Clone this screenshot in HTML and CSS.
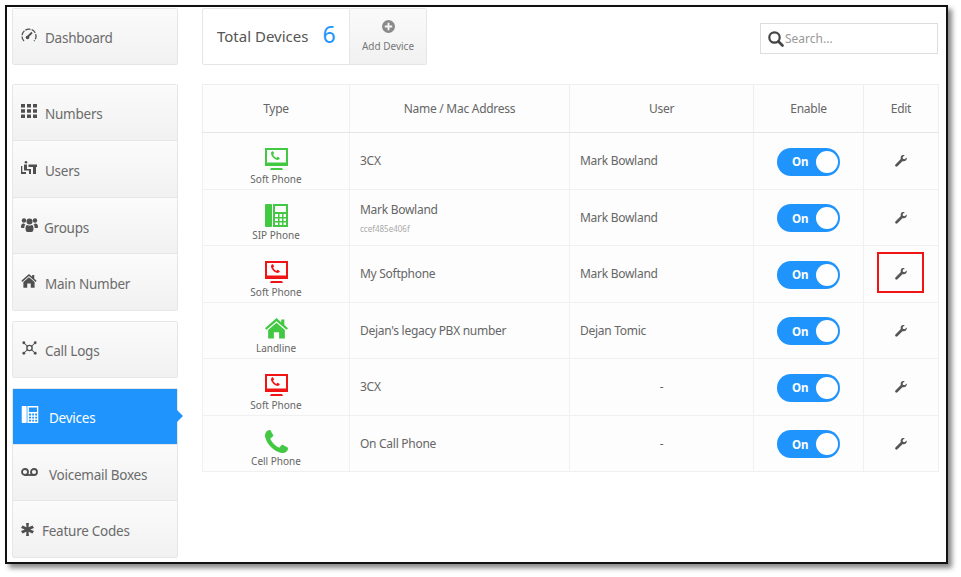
FILE: index.html
```html
<!DOCTYPE html>
<html lang="en">
<head>
<meta charset="utf-8">
<title>Devices</title>
<link rel="stylesheet" href="styles.css">
</head>
<body>
<svg class="defs" width="0" height="0" aria-hidden="true">
  <defs>
    <symbol id="monitor" viewBox="0 0 23 23">
      <path fill="currentColor" fill-rule="evenodd" d="M0 0H23V18H0ZM2 2V14.500H21V2Z"/>
      <path fill="currentColor" d="M6 20H17L18 22H5Z"/>
      <path fill="currentColor" transform="translate(6 3.200) scale(.0062)" d="M1408 1112q0 27-10 70.500t-21 68.500q-21 50-122 106-94 51-186 51-27 0-53-3.500t-57.500-12.500-47-14.500-55.500-20.500-49-18q-98-35-175-83-127-79-264-216t-216-264q-48-77-83-175-3-9-18-49t-20.500-55.500-14.500-47-12.500-57.500-3.500-53q0-92 51-186 56-101 106-122 25-11 68.500-21t70.500-10q14 0 21 3 18 6 53 76 11 19 30 54t35 63.500 31 53.500q3 4 17.500 25t21.500 35.500 7 28.500q0 20-28.500 50t-62 55-62 53-28.500 46q0 9 5 22.500t8.500 20.500 14 24 11.500 19q76 137 174 235t235 174q2 1 19 11.500t24 14 20.500 8.500 22.500 5q18 0 46-28.500t53-62 55-62 50-28.500q14 0 28.500 7t35.500 21.500 25 17.500q25 15 53.500 31t63.500 35 54 30q70 35 76 53 3 7 3 21z"/>
    </symbol>
    <symbol id="wrench" viewBox="0 0 13 13">
      <path fill="currentColor" d="M12.800 2.700 10.400 4.700 8.500 4 8.300 2.200 10.600.3C9 -.3 7.200.2 6.500 1.500 6 2.400 6 3.400 6.300 4.300L.5 10.300C0 10.900 0 11.700.6 12.300 1.200 12.900 2 12.900 2.600 12.300L8.400 6.600C9.500 7 10.800 6.800 11.800 5.900 12.700 5 13 3.800 12.800 2.700Z"/>
    </symbol>
    <symbol id="deskphone" viewBox="0 0 23 23">
      <rect fill="currentColor" x="0" y="0" width="7" height="23" rx="1"/>
      <path fill="currentColor" fill-rule="evenodd" d="M8 0H23V23H8ZM10 2V8H21V2ZM10 10V13H13V10ZM14.500 10V13H17V10ZM18.500 10V13H21V10ZM10 14.500V17H13V14.500ZM14.500 14.500V17H17V14.500ZM18.500 14.500V17H21V14.500ZM10 18.500V21H13V18.500ZM14.500 18.500V21H17V18.500ZM18.500 18.500V21H21V18.500Z"/>
    </symbol>
    <symbol id="home" viewBox="0 0 22 20">
      <path fill="currentColor" d="M11 0 15.500 4V1.500H18.500V6.700L22 9.800 20.600 11.300 11 3 1.400 11.300 0 9.800Z"/>
      <path fill="currentColor" d="M11 4.600 19 11.400V19.500H13.500V13.500H8.500V19.500H3V11.400Z"/>
    </symbol>
  </defs>
</svg>
<div class="frame">
  <nav class="side">
    <div class="group">
      <a class="item solo">
        <svg class="nav-ico" viewBox="0 0 16 14"><path fill="none" stroke="currentColor" stroke-width="1.300" stroke-dasharray="5 1.200" d="M3 13A7 7 0 1 1 13 13"/><path fill="none" stroke="currentColor" stroke-width="1.800" d="M6 9.500 11 4.500"/><circle cx="6.500" cy="9.500" r="1.800" fill="currentColor"/></svg>
        <span>Dashboard</span>
      </a>
    </div>
    <div class="group">
      <a class="item">
        <svg class="nav-ico" viewBox="0 0 16 14"><path fill="currentColor" d="M0 0h4v3.600H0zM6 0h4v3.600H6zM12 0h4v3.600h-4zM0 5.200h4v3.600H0zM6 5.200h4v3.600H6zM12 5.200h4v3.600h-4zM0 10.400h4V14H0zM6 10.400h4V14H6zM12 10.400h4V14h-4z"/></svg>
        <span>Numbers</span>
      </a>
      <a class="item low">
        <svg class="nav-ico" viewBox="0 0 16 14"><circle cx="5" cy="1.300" r="1.300" fill="currentColor"/><path fill="currentColor" d="M0 5h1.300v6H5V13H0ZM3 3.500H6V8H10V13H8V9.500H3ZM7.500 3.500H16V6H15V13H12V6H7.500Z"/></svg>
        <span>Users</span>
      </a>
      <a class="item tight lower">
        <svg class="nav-ico nav-ico-lg" viewBox="0 0 17 14"><circle cx="3" cy="2.500" r="2.200" fill="currentColor"/><circle cx="14" cy="2.500" r="2.200" fill="currentColor"/><circle cx="8.500" cy="3.500" r="3" fill="currentColor"/><path fill="currentColor" d="M0 9C0 6 1.500 5.500 3 5.500 3.500 6 4 6.500 4.500 6.500 3.500 7.500 3.300 8.500 3.300 10H1C.3 10 0 9.500 0 9ZM17 9C17 6 15.500 5.500 14 5.500 13.500 6 13 6.500 12.500 6.500 13.500 7.500 13.700 8.500 13.700 10H16C16.700 10 17 9.500 17 9ZM4.500 11C4.500 8.500 5 7 6.300 7 7 7.500 7.800 7.800 8.500 7.800 9.200 7.800 10 7.500 10.700 7 12 7 12.500 8.500 12.500 11 12.500 13 11.500 14 10.500 14H6.500C5.500 14 4.500 13 4.500 11Z"/></svg>
        <span>Groups</span>
      </a>
      <a class="item low">
        <svg class="nav-ico" viewBox="0 0 22 20"><use href="#home"/></svg>
        <span>Main Number</span>
      </a>
    </div>
    <div class="group">
      <a class="item solo snug">
        <svg class="nav-ico nav-ico-lg" viewBox="0 0 17 16"><path stroke="currentColor" stroke-width="1.200" d="M2 2 6 6M15 2 11 6M2 14 6 10M15 14 11 10"/><circle cx="8.500" cy="8" r="3" fill="none" stroke="currentColor" stroke-width="1.600"/><circle cx="2" cy="2" r="1.600" fill="currentColor"/><circle cx="15" cy="2" r="1.600" fill="currentColor"/><circle cx="2" cy="14" r="1.600" fill="currentColor"/><circle cx="15" cy="14" r="1.600" fill="currentColor"/></svg>
        <span>Call Logs</span>
      </a>
    </div>
    <div class="group">
      <a class="item active">
        <svg class="nav-ico nav-ico-lg" viewBox="0 0 23 23"><use href="#deskphone"/></svg>
        <span>Devices</span>
      </a>
      <a class="item low">
        <svg class="nav-ico nav-ico-lg" viewBox="0 0 17 8"><path fill="none" stroke="currentColor" stroke-width="1.800" d="M4 7H13"/><circle cx="4" cy="4" r="3" fill="none" stroke="currentColor" stroke-width="1.800"/><circle cx="13" cy="4" r="3" fill="none" stroke="currentColor" stroke-width="1.800"/></svg>
        <span class="voice">Voicemail Boxes</span>
      </a>
      <a class="item low">
        <svg class="nav-ico nav-ico-sm" viewBox="0 0 12 12"><path fill="currentColor" d="M4.700 0H7.300L7 4 10.600 2.300 12 4.700 8.500 6 12 7.300 10.600 9.700 7 8 7.300 12H4.700L5 8 1.400 9.700 0 7.300 3.500 6 0 4.700 1.400 2.300 5 4Z"/></svg>
        <span>Feature Codes</span>
      </a>
    </div>
  </nav>
  <main class="main">
    <header class="top">
      <div class="summary">
        <div class="total"><span class="total-label">Total Devices</span><span class="total-num">6</span></div>
        <a class="add">
          <svg class="add-ico" viewBox="0 0 14 14"><path fill="currentColor" fill-rule="evenodd" d="M7 0A7 7 0 1 1 7 14 7 7 0 0 1 7 0ZM6 3V6H3V8H6V11H8V8H11V6H8V3Z"/></svg>
          <span>Add Device</span>
        </a>
      </div>
      <label class="search">
        <svg class="search-ico" viewBox="0 0 16 16"><circle cx="6.500" cy="6.500" r="5.200" fill="none" stroke="currentColor" stroke-width="2.200"/><path stroke="currentColor" stroke-width="2.600" stroke-linecap="round" d="M10.500 10.500 14.500 14.500"/></svg>
        <span>Search...</span>
      </label>
    </header>
    <table class="devices">
      <colgroup><col class="c1"><col class="c2"><col class="c3"><col class="c4"><col class="c5"></colgroup>
      <thead>
        <tr><th>Type</th><th>Name / Mac Address</th><th>User</th><th>Enable</th><th>Edit</th></tr>
      </thead>
      <tbody>
        <tr>
          <td class="type green"><svg class="t-ico"><use href="#monitor"/></svg><small>Soft Phone</small></td>
          <td class="text">3CX</td><td class="text">Mark Bowland</td>
          <td class="mid"><span class="toggle"><b>On</b><i></i></span></td>
          <td class="mid"><svg class="wrench"><use href="#wrench"/></svg></td>
        </tr>
        <tr>
          <td class="type green"><svg class="t-ico"><use href="#deskphone"/></svg><small>SIP Phone</small></td>
          <td class="text">Mark Bowland<em>ccef485e406f</em></td><td class="text">Mark Bowland</td>
          <td class="mid"><span class="toggle"><b>On</b><i></i></span></td>
          <td class="mid"><svg class="wrench"><use href="#wrench"/></svg></td>
        </tr>
        <tr>
          <td class="type red"><svg class="t-ico"><use href="#monitor"/></svg><small>Soft Phone</small></td>
          <td class="text">My Softphone</td><td class="text">Mark Bowland</td>
          <td class="mid"><span class="toggle"><b>On</b><i></i></span></td>
          <td class="mid marked"><svg class="wrench"><use href="#wrench"/></svg><span class="mark"></span></td>
        </tr>
        <tr>
          <td class="type green"><svg class="t-ico"><use href="#home"/></svg><small>Landline</small></td>
          <td class="text">Dejan's legacy PBX number</td><td class="text">Dejan Tomic</td>
          <td class="mid"><span class="toggle"><b>On</b><i></i></span></td>
          <td class="mid"><svg class="wrench"><use href="#wrench"/></svg></td>
        </tr>
        <tr>
          <td class="type red"><svg class="t-ico"><use href="#monitor"/></svg><small>Soft Phone</small></td>
          <td class="text">3CX</td><td class="mid">-</td>
          <td class="mid"><span class="toggle"><b>On</b><i></i></span></td>
          <td class="mid"><svg class="wrench"><use href="#wrench"/></svg></td>
        </tr>
        <tr>
          <td class="type green"><svg class="t-ico" viewBox="0 0 1408 1408"><path fill="currentColor" d="M1408 1112q0 27-10 70.500t-21 68.500q-21 50-122 106-94 51-186 51-27 0-53-3.500t-57.500-12.500-47-14.500-55.500-20.500-49-18q-98-35-175-83-127-79-264-216t-216-264q-48-77-83-175-3-9-18-49t-20.500-55.500-14.500-47-12.500-57.500-3.500-53q0-92 51-186 56-101 106-122 25-11 68.500-21t70.500-10q14 0 21 3 18 6 53 76 11 19 30 54t35 63.500 31 53.500q3 4 17.500 25t21.500 35.500 7 28.500q0 20-28.500 50t-62 55-62 53-28.500 46q0 9 5 22.500t8.500 20.500 14 24 11.500 19q76 137 174 235t235 174q2 1 19 11.500t24 14 20.500 8.500 22.500 5q18 0 46-28.500t53-62 55-62 50-28.500q14 0 28.500 7t35.500 21.500 25 17.500q25 15 53.500 31t63.500 35 54 30q70 35 76 53 3 7 3 21z"/></svg><small>Cell Phone</small></td>
          <td class="text">On Call Phone</td><td class="mid">-</td>
          <td class="mid"><span class="toggle"><b>On</b><i></i></span></td>
          <td class="mid"><svg class="wrench"><use href="#wrench"/></svg></td>
        </tr>
      </tbody>
    </table>
  </main>
</div>
</body>
</html>
```
FILE: styles.css
```css
* { box-sizing: border-box; }
html, body { margin: 0; height: 100%; background: #fff; }
body {
  padding: 5px 0 0 5px;
  font-family: "Noto Sans", "Open Sans", sans-serif;
  color: #666;
  overflow: hidden;
}
.defs { position: absolute; }
.frame {
  width: 943px;
  height: 559px;
  border: 2px solid #111;
  box-shadow: 4px 4px 5px #888;
  padding: 1px 8px 0 5px;
  display: grid;
  grid-template-columns: 166px 736px;
  column-gap: 24px;
}
.side { display: flex; flex-direction: column; }
.group {
  display: flex;
  flex-direction: column;
  border: 1px solid #e6e6e6;
  border-radius: 2px;
  margin-bottom: 10px;
}
.group:first-child { margin-bottom: 19px; }
.item {
  height: 56.250px;
  display: flex;
  align-items: center;
  gap: 8px;
  padding: 2px 0 0 8px;
  font-size: 13.500px;
  letter-spacing: -.25px;
  color: #6b6b6b;
  background: linear-gradient(#fbfbfb, #f1f1f1);
  border-bottom: 1px solid #e6e6e6;
  position: relative;
}
.item:last-child { border-bottom: 0; }
.item.solo { height: 55px; }
.item.tight { gap: 6px; }
.item.snug { gap: 7px; }
.item.low { padding-top: 4px; }
.item.lower { padding-top: 5px; }
.group:last-child .item { height: 56px; }
.nav-ico { width: 16px; height: 14px; color: #4f4f4f; flex: none; margin-top: -5px; }
.nav-ico-lg { width: 17px; }
.nav-ico-sm { width: 13px; height: 13px; margin-top: -3px; }
.voice { margin-left: 3px; }
.item.active { background: #2094fd; color: #fff; }
.item.active .nav-ico { color: #fff; width: 18px; height: 17px; margin-top: -7px; }
.item.active span { margin-left: 2px; }
.item.active::after {
  content: "";
  position: absolute;
  left: 100%;
  top: 21px;
  border: 6px solid transparent;
  border-left-color: #2094fd;
}
.main { display: flex; flex-direction: column; min-width: 0; }
.top {
  display: flex;
  justify-content: space-between;
  align-items: center;
  height: 57px;
  margin-bottom: 19px;
}
.summary {
  display: flex;
  width: 225px;
  height: 57px;
  border: 1px solid #e6e6e6;
  border-radius: 2px;
}
.total {
  width: 147px;
  display: flex;
  align-items: center;
  gap: 14px;
  padding-left: 14px;
  border-right: 1px solid #e6e6e6;
}
.total-label { font-size: 15px; color: #555; margin-top: -2px; }
.total-num { font-size: 23px; color: #2094fd; margin-top: -5px; }
.add {
  flex: 1;
  display: flex;
  flex-direction: column;
  align-items: center;
  justify-content: center;
  gap: 6px;
  background: linear-gradient(#fafafa, #f1f1f1);
  font-size: 10px;
  color: #777;
}
.add-ico { width: 13px; height: 13px; color: #8a8a8a; }
.search {
  width: 178px;
  height: 31px;
  margin-top: 4px;
  border: 1px solid #ddd;
  display: flex;
  align-items: center;
  gap: 1px;
  padding-left: 7px;
  font-size: 12px;
  color: #999;
}
.search-ico { width: 16px; height: 16px; color: #444; }
.devices {
  width: 736px;
  table-layout: fixed;
  border-collapse: collapse;
  background: #fdfdfd;
  border: 1px solid #e6e6e6;
  font-size: 12px;
  letter-spacing: -.28px;
  color: #666;
}
.c1 { width: 147px; }
.c2 { width: 220px; }
.c3 { width: 184px; }
.c4 { width: 110px; }
.c5 { width: 75px; }
th {
  height: 48px;
  font-weight: 400;
  text-align: center;
  border: 1px solid #eee;
  border-bottom-color: #e6e6e6;
  padding: 0;
  color: #666;
}
td { height: 56.500px; border: 1px solid #f0f0f0; padding: 0; vertical-align: middle; }
.text { padding: 0 0 0 10px; }
.text em { display: block; font-style: normal; font-size: 8px; letter-spacing: 0; color: #aaa; margin-top: 5px; }
.mid { text-align: center; position: relative; }
.type { text-align: center; vertical-align: bottom; padding-bottom: 3px; }
.type small { display: block; font-size: 10px; letter-spacing: 0; color: #666; line-height: 13px; margin-top: 2px; }
.t-ico { display: block; width: 23px; height: 23px; margin: 0 auto; }
.green .t-ico { color: #43c843; }
.red .t-ico { color: #f01414; }
.toggle {
  display: inline-flex;
  align-items: center;
  justify-content: space-between;
  vertical-align: middle;
  width: 63px;
  height: 28px;
  margin-top: 2px;
  border-radius: 14px;
  background: #2094fd;
  padding: 0 2px 0 15px;
  color: #fff;
}
.toggle b { font-size: 11.500px; font-weight: 700; letter-spacing: 0; }
.toggle i { width: 22px; height: 22px; border-radius: 50%; background: #fff; }
.wrench { width: 12px; height: 12px; color: #555; vertical-align: middle; margin-bottom: 2px; }
.mark {
  position: absolute;
  left: 13px;
  top: 6px;
  width: 47px;
  height: 41px;
  border: 2px solid #f01414;
}
```
